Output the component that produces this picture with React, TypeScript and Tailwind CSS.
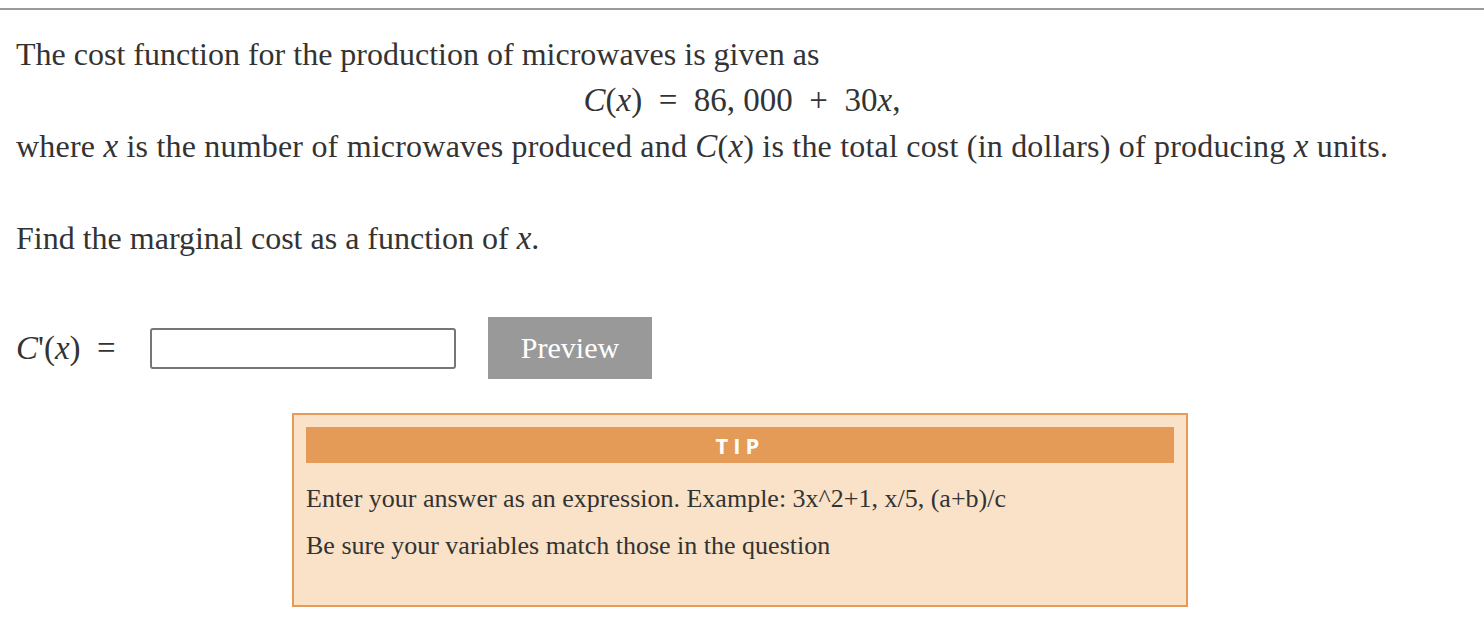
import React from 'react';

const serif = "font-['Liberation_Serif',_'Times_New_Roman',_serif]";

const X = () => <i className="font-['Liberation_Serif',_serif] text-[33px]">x</i>;

export default function App() {
  return (
    <div className={`${serif} min-h-[628px] w-[1484px] bg-white text-[#333]`}>
      <div className="h-[8px]" />
      <div className="h-[2px] bg-[#9a9a9a]" />
      <div className="px-4 pt-[21px] text-[32px] leading-[46px]">
        <p>The cost function for the production of microwaves is given as</p>
        <p className="text-center text-[33px]">
          <i>C</i>(<X />) &nbsp;= &nbsp;86, 000 &nbsp;+ &nbsp;30<X />,
        </p>
        <p className="tracking-[0.2px]">
          where <X /> is the number of microwaves produced and <i className="text-[33px]">C</i>(<X />) is the total cost (in dollars) of producing <X /> units.
        </p>
        <p className="mt-[46px]">
          Find the marginal cost as a function of <X />.
        </p>

        <div className="mt-[56px] flex items-center">
          <span className="w-[134px] text-[33px]">
            <i>C</i>'(<X />) &nbsp;=
          </span>
          <div className="h-[41px] w-[306px] rounded-[3px] border-2 border-[#767676] bg-white" />
          <button className="ml-[32px] h-[62px] w-[164px] bg-[#999] text-[30px] text-white">
            Preview
          </button>
        </div>

        <div className="mt-[34px] ml-[276px] h-[194px] w-[896px] border-2 border-[#e59b57] bg-[#f9e2c8] px-[12px] pt-[12px]">
          <div className="flex h-[36px] items-center justify-center bg-[#e39b57] font-['Open_Sans',_sans-serif] text-[22px] font-bold tracking-[5px] text-white">
            TIP
          </div>
          <p className="mt-[12px] text-[26px] leading-[47px]">
            Enter your answer as an expression. Example: 3x^2+1, x/5, (a+b)/c
          </p>
          <p className="text-[26px] leading-[47px]">Be sure your variables match those in the question</p>
        </div>
      </div>
    </div>
  );
}
